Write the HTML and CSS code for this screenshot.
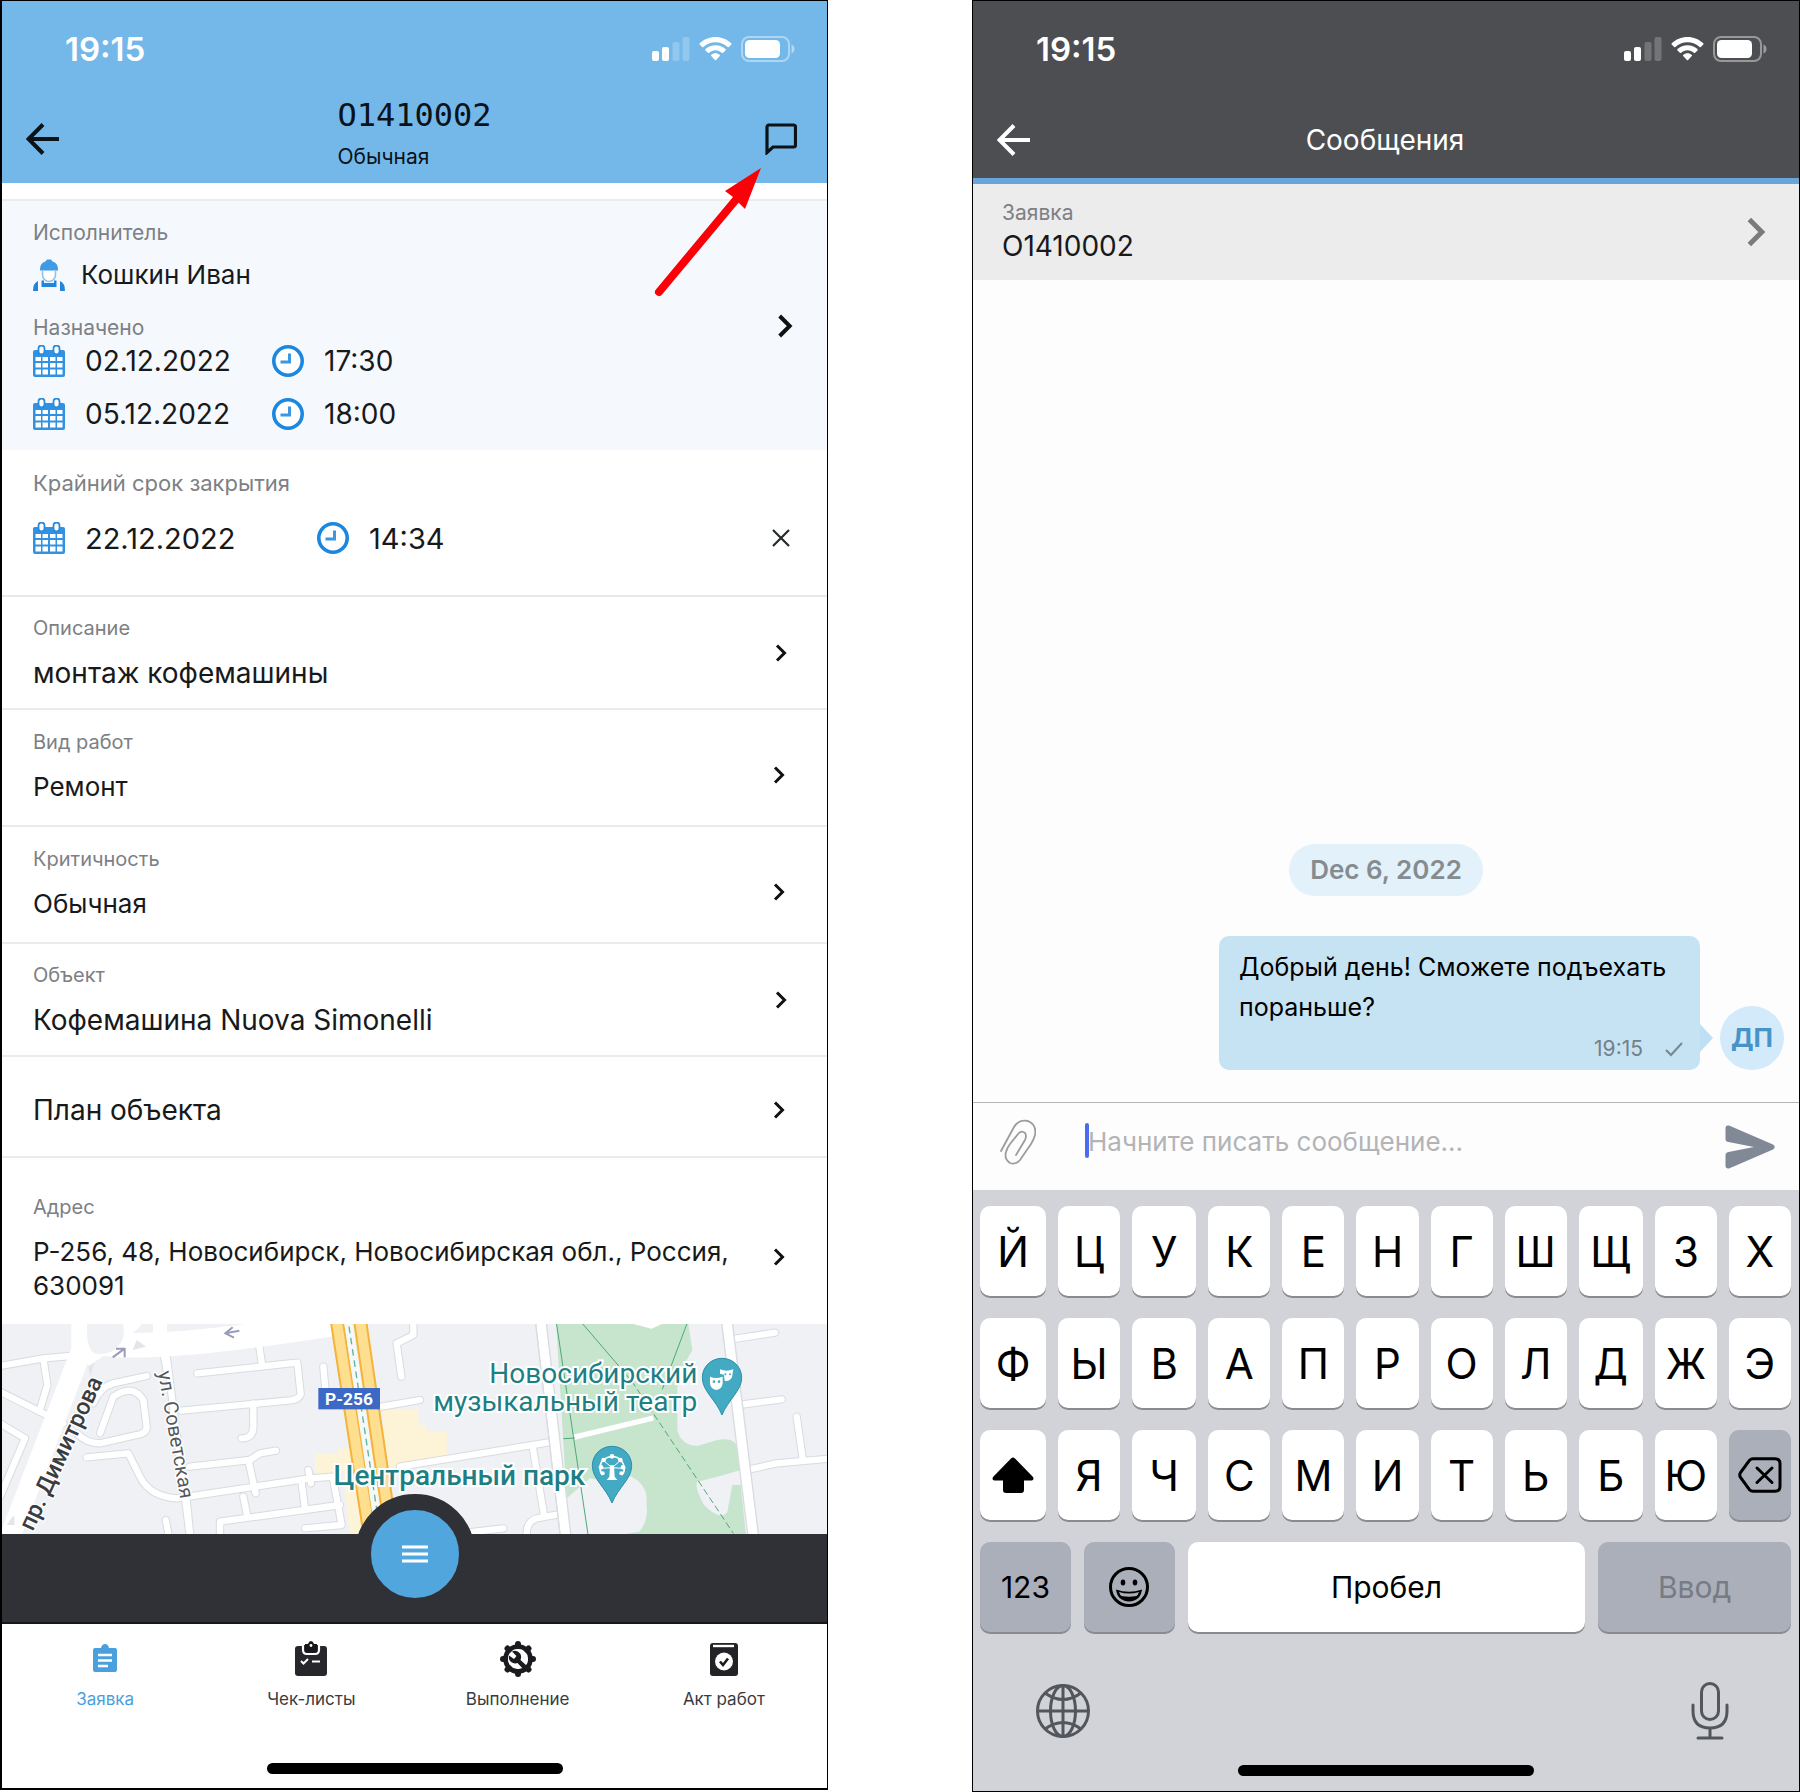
FILE: index.html
```html
<!DOCTYPE html>
<html lang="ru">
<head>
<meta charset="utf-8">
<meta name="viewport" content="width=device-width, initial-scale=1">
<title>Заявка О1410002</title>
<link rel="stylesheet" href="styles.css">
</head>
<body>
<svg class="sprite" aria-hidden="true">
  <symbol id="signal" viewBox="0 0 38 24"><rect x="0" y="14" width="7" height="10" rx="2"/><rect x="10" y="10" width="7" height="14" rx="2"/><rect x="20.500" y="5" width="7" height="19" rx="2" opacity=".22"/><rect x="30.500" y="0" width="7" height="24" rx="2" opacity=".22"/></symbol>
  <symbol id="wifi" viewBox="0 0 33 24"><path d="M16.500 0C22.600 0 28.200 2.400 32.300 6.300c.4.400.4.900 0 1.300l-2.400 2.400c-.4.400-.9.400-1.300 0C25.400 7 21.200 5.200 16.500 5.200S7.600 7 4.400 10c-.4.400-.9.400-1.300 0L.7 7.600c-.4-.4-.4-.9 0-1.300C4.800 2.400 10.400 0 16.500 0z"/><path d="M16.500 8.200c3.900 0 7.400 1.500 10 3.900.4.400.4.900 0 1.300l-2.400 2.400c-.4.400-.9.400-1.300 0-1.700-1.500-3.900-2.500-6.300-2.500s-4.600 1-6.300 2.500c-.4.400-.9.400-1.300 0l-2.400-2.400c-.4-.4-.4-.9 0-1.300 2.600-2.400 6.100-3.900 10-3.900z"/><path d="M16.500 16.200c1.700 0 3.200.6 4.300 1.700.4.400.4.800 0 1.200l-3.700 3.900c-.4.400-.8.400-1.200 0l-3.700-3.900c-.4-.4-.4-.8 0-1.200 1.100-1.100 2.600-1.700 4.300-1.700z"/></symbol>
  <symbol id="battery" viewBox="0 0 54 26"><rect x="1" y="1" width="47" height="24" rx="7" fill="none" stroke="currentColor" stroke-width="2" opacity=".42"/><rect x="4" y="4" width="35" height="18" rx="4.500"/><path d="M50.500 8.500c2 .8 3 2.400 3 4.500s-1 3.700-3 4.500z" opacity=".45"/></symbol>
  <symbol id="back" viewBox="0 0 34 34"><path d="M17 2.500 2.500 17 17 31.500M3 17h30" fill="none" stroke="currentColor" stroke-width="4"/></symbol>
  <symbol id="chevron" viewBox="0 0 12 18"><path d="M2 1.500 9.500 9 2 16.500" fill="none" stroke="currentColor" stroke-width="3"/></symbol>
  <symbol id="calendar" viewBox="0 0 32 32"><path d="M2 5h28a2 2 0 0 1 2 2v23a2 2 0 0 1-2 2H2a2 2 0 0 1-2-2V7a2 2 0 0 1 2-2z" fill="#3092e0"/><rect x="5.500" y=".500" width="6" height="9" rx="3" fill="#fff" stroke="#2a8cdc" stroke-width="1.800"/><rect x="20.500" y=".500" width="6" height="9" rx="3" fill="#fff" stroke="#2a8cdc" stroke-width="1.800"/><g fill="#fff"><path d="M2.500 12h5.500v4H2.500zM9.500 12H15v4H9.500zM17 12h5.500v4H17zM24 12h5.500v4H24zM2.500 18H8v4.500H2.500zM9.500 18H15v4.500H9.500zM17 18h5.500v4.500H17zM24 18h5.500v4.500H24zM2.500 24.500H8v5H2.500zM9.500 24.500H15v5H9.500zM17 24.500h5.500v5H17zM24 24.500h5.500v5H24z"/></g></symbol>
  <symbol id="clock" viewBox="0 0 32 32"><circle cx="16" cy="16" r="14.200" fill="#fff" stroke="#1b87de" stroke-width="3.600"/><path d="M17.500 8.500V17H8.500" fill="none" stroke="#3a97e2" stroke-width="3"/></symbol>
</svg>

<main class="screens">
  <section class="phone phone--request" aria-label="Заявка">
    <header class="top top--blue">
      <div class="status">
        <span class="status__time">19:15</span>
        <span class="status__icons">
          <svg class="i-signal"><use href="#signal"/></svg><svg class="i-wifi"><use href="#wifi"/></svg><svg class="i-battery"><use href="#battery"/></svg>
        </span>
      </div>
      <div class="nav">
        <button class="nav__button" type="button" aria-label="Назад"><svg class="i-back"><use href="#back"/></svg></button>
        <div class="nav__heading">
          <h1 class="nav__number">О1410002</h1>
          <p class="nav__kind">Обычная</p>
        </div>
        <button class="nav__button nav__button--end" type="button" aria-label="Сообщения"><svg class="i-chat" viewBox="0 0 32 32"><path d="M3.500 2h25a2 2 0 0 1 2 2v18a2 2 0 0 1-2 2H8l-6 5.500V4a2 2 0 0 1 1.500-2z" fill="none" stroke="#0b1218" stroke-width="3.200"/></svg></button>
      </div>
      <svg class="pointer" viewBox="0 0 112 132" aria-hidden="true"><path d="M6 126 86 30" stroke="#fb0007" stroke-width="8" stroke-linecap="round"/><path d="M108 2 92 43 84 35 80 31 72 25z" fill="#fb0007"/></svg>
    </header>

    <section class="assignee">
      <div class="assignee__body">
        <p class="label">Исполнитель</p>
        <p class="person">
          <svg class="i-worker" viewBox="0 0 32 32"><path d="M7 10Q7 4 12.500 2.500L14 .5h4l1.500 2Q25 4 25 10v1.500H7z" fill="#3f9be3"/><path d="M9.500 12v3.500c0 4 3 7 6.500 7s6.500-3 6.500-7V12" fill="#fff" stroke="#8fc3ee" stroke-width="1.600"/><path d="M0 32q0-8 5-10v10zM32 32q0-8-5-10v10z" fill="#1f86dc"/><path d="M8.500 21.500h2.500V24h10v-2.500h2.500V28h-15z" fill="#1f86dc"/></svg>
          <span class="value">Кошкин Иван</span>
        </p>
        <p class="label">Назначено</p>
        <div class="dates">
          <div class="when"><svg class="i-32"><use href="#calendar"/></svg><span class="when__date">02.12.2022</span><svg class="i-32"><use href="#clock"/></svg><span>17:30</span></div>
          <div class="when"><svg class="i-32"><use href="#calendar"/></svg><span class="when__date">05.12.2022</span><svg class="i-32"><use href="#clock"/></svg><span>18:00</span></div>
        </div>
      </div>
      <svg class="i-chevron i-chevron--big"><use href="#chevron"/></svg>
    </section>

    <section class="deadline">
      <p class="label">Крайний срок закрытия</p>
      <div class="when when--wide"><svg class="i-32"><use href="#calendar"/></svg><span class="when__date">22.12.2022</span><svg class="i-32"><use href="#clock"/></svg><span>14:34</span>
        <button class="clear" type="button" aria-label="Очистить"><svg class="i-cross" viewBox="0 0 20 20"><path d="m2 2 16 16M18 2 2 18" stroke="#26292b" stroke-width="2.200"/></svg></button>
      </div>
    </section>

    <a class="row" href="#description"><span class="row__text"><span class="label">Описание</span><span class="value value--large">монтаж кофемашины</span></span><svg class="i-chevron"><use href="#chevron"/></svg></a>
    <a class="row row--tall" href="#work"><span class="row__text"><span class="label">Вид работ</span><span class="value">Ремонт</span></span><svg class="i-chevron"><use href="#chevron"/></svg></a>
    <a class="row row--tall" href="#priority"><span class="row__text"><span class="label">Критичность</span><span class="value">Обычная</span></span><svg class="i-chevron"><use href="#chevron"/></svg></a>
    <a class="row" href="#object"><span class="row__text"><span class="label">Объект</span><span class="value value--large">Кофемашина Nuova Simonelli</span></span><svg class="i-chevron"><use href="#chevron"/></svg></a>
    <a class="row row--single" href="#plan"><span class="value value--large">План объекта</span><svg class="i-chevron"><use href="#chevron"/></svg></a>
    <a class="row row--address" href="#address"><span class="row__text"><span class="label">Адрес</span><span class="value">Р-256, 48, Новосибирск, Новосибирская обл., Россия, 630091</span></span><svg class="i-chevron"><use href="#chevron"/></svg></a>

    <svg class="map" viewBox="6 12 2475 630" preserveAspectRatio="xMidYMid slice" role="img" aria-label="Карта">
      <defs>
        <g id="streets" fill="none" stroke-linejoin="round" stroke-linecap="round">
          <path d="M0 138 130 115 245 105M130 115l12 80-24 80M0 215l190 95M0 310l75 45L0 530M490 100l12 60M500 110l70 540"/>
          <path d="M440 168 340 190q-40 10-60 60M300 340l40-110q60-40 90 10l10 80q0 20-30 25l-110 25q-40 0-70-30M260 412l125-12 35 70q30 60 110 65l400-60 70-5"/>
          <path d="M592 160l300-32 10 95q-5 15-30 18L545 272M775 60l12 80M760 250v70q0 35-35 35M570 440l180-20 30-20 48-8M745 420l22 100M730 530l12 60M905 490l10 75M660 645v-40l360-50M925 450l8 40M1000 480l25 135-110 10"/>
          <path d="M970 140l6 65M560 540l10 100M497 600l8 40M1204 170l-14-100 50-25 0-60M1145 260l115-20"/>
          <path d="M1200 440 1660 365M1598 380l35 210M1580 640q0-35 30-45l80-15M1380 640l130-15M2180 60l145-22M2215 255l130-17M2390 290l18 125M2240 450l90-20 170-15"/>
        </g>
      </defs>
      <rect x="0" y="0" width="2490" height="650" fill="#eff1f4"/>
      <path d="M1150 270h105v45h25v20h60v70l-190 40v205h-100l-20-190h-85v-60h70v-15h135z" fill="#fdf3d6"/>
      <path d="M1668 0h395l14 90-45 80v160q10 45 60 48l60-18q50-10 60 20l10 70-70 20q-40 10-60 15-10 15 20 70 50 50 70 20l15-80h25l20 190H1818q-5-40 40-40l60-10q25-30 22-70-10-50-70-70l-100-20-70 60z" fill="#c7e4cd"/>
      <path d="M1790 450l105 20q40 20 45 60v50q-10 25-40 30-60-10-80 30h-50z" fill="#eff1f4"/>
      <path d="M1900 12h85l-30 14z" fill="#fff"/>
      <use href="#streets" stroke="#d9dbe0" stroke-width="25"/>
      <use href="#streets" stroke="#fff" stroke-width="19"/>
      <path d="M1622 0l75 650M2180 0l80 650" stroke="#d9dbe0" stroke-width="36"/>
      <path d="M1622 0l75 650M2180 0l80 650" stroke="#fff" stroke-width="28"/>
      <path d="M1606 0l75 650" stroke="#dadde1" stroke-width="3"/>
      <g stroke="#fff" fill="none"><path d="M1720 352l240-58" stroke-width="16"/><path d="M270 60Q380 110 1010 10" stroke-width="74"/><path d="M245 0v90L30 650" stroke-width="62"/><path d="M255 120 345 60 410 0M480 0v90" stroke-width="42"/></g>
      <path d="M262 10q-6 70 20 90 60 10 85-40 10-30 0-50z" fill="#eff1f4"/>
      <path d="M410 60l28 20-40 10z" fill="#e3e5e9"/>
      <path d="M265 140l18-12-12 40zM20 615l22-30 2 30z" fill="#e3e5e9"/>
      <g fill="none" stroke="#4ea977" stroke-width="3"><path d="M1668 0 1765 650M1745 8l150 175M2062 8l-75 200M1690 356l35-2"/><path d="M1895 183 2200 640" stroke-dasharray="20 10"/></g>
      <path d="M1010 0 1110 650M1080 0 1175 650" stroke="#f5b23c" stroke-width="42"/>
      <path d="M1010 0 1110 650M1080 0 1175 650" stroke="#fddf8f" stroke-width="30"/>
      <path d="M1044 0 1140 650" stroke="#f4f8f7" stroke-width="25"/>
      <path d="M1047 20 1138 620" stroke="#5fb3a0" stroke-width="4" stroke-dasharray="20 14"/>
      <g fill="none" stroke="#9a9bbb" stroke-width="6"><path d="M718 32l-42 8m22-18-22 18 26 13M338 112l36-26m-26 0h26v26"/></g>
      <rect x="955" y="204" width="185" height="64" fill="#3c68c6"/>
      <text x="1047" y="254" text-anchor="middle" class="map__road-sign">Р-256</text>
      <g class="map__street">
        <text transform="translate(98 636) rotate(-65)" class="map__street--main">пр. Димитрова</text>
        <text transform="translate(474 156) rotate(80)">ул. Советская</text>
      </g>
      <g class="map__place">
        <text x="2092" y="188" text-anchor="end">Новосибирский</text>
        <text x="2092" y="272" text-anchor="end">музыкальный театр</text>
        <text x="1756" y="495" text-anchor="end" class="map__place--park">Центральный парк</text>
      </g>
      <g fill="#43aac3" stroke="#2e8fa8" stroke-width="3">
        <path d="M2166 115c33 0 59 26 59 58 0 40-40 65-59 112-19-47-59-72-59-112 0-32 26-58 59-58z"/>
        <path d="M1836 379c33 0 59 26 59 58 0 40-40 65-59 112-19-47-59-72-59-112 0-32 26-58 59-58z"/>
      </g>
      <path d="M2130 170q18 8 38 0v20q-2 18-19 20-17-2-19-20z" fill="#fff"/><path d="M2160 148q20 8 40 0l-4 24q-8 14-22 10l-2-18-12-3z" fill="#fff"/>
      <g fill="#43aac3"><circle cx="2142" cy="185" r="4"/><circle cx="2157" cy="185" r="4"/><circle cx="2176" cy="163" r="3"/><circle cx="2190" cy="163" r="3"/></g>
      <g fill="none" stroke="#fff"><path d="M1806 465q-14-28 4-46 28-20 52 0 20 24 4 46" stroke-width="5"/><path d="M1812 423l24 20 24-20M1804 445l32-2 32 2" stroke-width="3"/></g>
      <g fill="#fff"><path d="M1830 436h12l2 34 8 10h-32l8-10z"/><circle cx="1803" cy="442" r="7"/><circle cx="1811" cy="420" r="7"/><circle cx="1836" cy="409" r="7"/><circle cx="1861" cy="420" r="7"/><circle cx="1869" cy="442" r="7"/><circle cx="1808" cy="460" r="6"/><circle cx="1864" cy="460" r="6"/></g>
    </svg>

    <div class="dock">
      <button class="fab" type="button" aria-label="Меню"><svg class="i-menu" viewBox="0 0 26 18"><path d="M0 2h26M0 9h26M0 16h26" stroke="#fff" stroke-width="3"/></svg></button>
    </div>

    <nav class="tabs">
      <a class="tab tab--active" href="#request">
        <svg class="tab__icon" viewBox="0 0 36 36"><path d="M8 7h6q1-4 4-4t4 4h6q2 0 2 2v20q0 2-2 2H8q-2 0-2-2V9q0-2 2-2z" fill="currentColor"/><path d="M11 14h14M11 19.500h14M11 25h10" stroke="#fff" stroke-width="2.600"/></svg>
        Заявка</a>
      <a class="tab" href="#checklists">
        <svg class="tab__icon" viewBox="0 0 36 36"><rect x="2" y="5" width="32" height="30" rx="3" fill="#26262b"/><path d="M10 4v5q0 4 4 4h8q4 0 4-4V4" fill="#1a1a1e" stroke="#fff" stroke-width="2.200"/><path d="M12 3h3q1-3 3-3t3 3h3v5q0 2-2 2h-8q-2 0-2-2z" fill="#17171a"/><circle cx="18" cy="4.500" r="1.400" fill="#fff"/><path d="m8 20 2.500 2.500L15 18M19 20.500h8" fill="none" stroke="#fff" stroke-width="2"/></svg>
        Чек-листы</a>
      <a class="tab" href="#work-progress">
        <svg class="tab__icon" viewBox="0 0 36 36"><circle cx="18" cy="18" r="12.500" fill="none" stroke="#1b1b1f" stroke-width="4.600"/><g stroke="#1b1b1f" stroke-width="6" stroke-linecap="round"><path d="M18 3v2M18 31v2M3 18h2M31 18h2M7.500 7.500l1.400 1.400M27.100 27.100l1.400 1.400M28.500 7.500l-1.400 1.400M8.900 27.100l-1.400 1.400"/></g><path d="M12 10.500l4.500 4.500-2.500 3-5-3.500q-1 5 3 7 3 1.500 5.500.5l6 6.500 3.500-3.500-6.500-6q1.500-4-.500-6.500-3-4-8-2z" fill="#1b1b1f"/></svg>
        Выполнение</a>
      <a class="tab" href="#act">
        <svg class="tab__icon" viewBox="0 0 36 36"><path d="M7 2h22q3 0 3 3v27q0 3-3 3H7q-3 0-3-3V5q0-3 3-3z" fill="#222227"/><path d="M7 5h21" stroke="#fff" stroke-width="2.400"/><circle cx="18" cy="20.500" r="9" fill="#fff"/><path d="m14 20.500 3 3.500 5-6.500" fill="none" stroke="#1b1b1f" stroke-width="2.600"/></svg>
        Акт работ</a>
    </nav>
    <div class="home-bar"></div>
  </section>

  <section class="phone phone--chat" aria-label="Сообщения">
    <header class="top top--dark">
      <div class="status">
        <span class="status__time">19:15</span>
        <span class="status__icons">
          <svg class="i-signal"><use href="#signal"/></svg><svg class="i-wifi"><use href="#wifi"/></svg><svg class="i-battery"><use href="#battery"/></svg>
        </span>
      </div>
      <div class="nav">
        <button class="nav__button" type="button" aria-label="Назад"><svg class="i-back"><use href="#back"/></svg></button>
        <h2 class="nav__title">Сообщения</h2>
      </div>
    </header>

    <a class="request-link" href="#request"><span class="row__text row__text--close"><span class="label">Заявка</span><span class="value value--large">О1410002</span></span><svg class="i-chevron i-chevron--grey"><use href="#chevron"/></svg></a>

    <div class="chat">
      <time class="chat__date" datetime="2022-12-06">Dec 6, 2022</time>
      <div class="message">
        <div class="bubble">
          <p class="bubble__text">Добрый день! Сможете подъехать пораньше?</p>
          <p class="bubble__meta"><time>19:15</time><svg class="i-check" viewBox="0 0 18 16"><path d="m1 9 5 5L17 2" fill="none" stroke="#748891" stroke-width="2"/></svg></p>
        </div>
        <span class="avatar">ДП</span>
      </div>
    </div>

    <form class="composer">
      <button class="icon-button" type="button" aria-label="Прикрепить файл"><svg class="i-clip" viewBox="0 0 36 46"><path d="M1 32 14 8Q19 0 28 2q9 4 7 14-1 4-4 9L20 41q-4 5-10 3-6-4-4-11 1-4 4-8l8-10q3-4 7-1 2 3 0 7l-9 15" fill="none" stroke="#9b9c9e" stroke-width="1.800" stroke-linecap="round"/></svg></button>
      <label class="composer__field"><span class="composer__caret"></span><input class="composer__input" type="text" placeholder="Начните писать сообщение..." aria-label="Сообщение"></label>
      <button class="icon-button icon-button--send" type="button" aria-label="Отправить"><svg class="i-send" viewBox="0 0 50 44"><path d="M4 .600 48 19.500q3.500 2.500 0 5L4 43.500q-3.500.5-3.500-3V30q0-2.500 3-3L29 22 3.500 17q-3-.5-3-3V3.500Q.5-.2 4 .600z" fill="#818896"/></svg></button>
    </form>

    <div class="keyboard">
      <div class="keys"><button class="key" type="button">Й</button><button class="key" type="button">Ц</button><button class="key" type="button">У</button><button class="key" type="button">К</button><button class="key" type="button">Е</button><button class="key" type="button">Н</button><button class="key" type="button">Г</button><button class="key" type="button">Ш</button><button class="key" type="button">Щ</button><button class="key" type="button">З</button><button class="key" type="button">Х</button></div>
      <div class="keys"><button class="key" type="button">Ф</button><button class="key" type="button">Ы</button><button class="key" type="button">В</button><button class="key" type="button">А</button><button class="key" type="button">П</button><button class="key" type="button">Р</button><button class="key" type="button">О</button><button class="key" type="button">Л</button><button class="key" type="button">Д</button><button class="key" type="button">Ж</button><button class="key" type="button">Э</button></div>
      <div class="keys"><button class="key" type="button" aria-label="Регистр"><svg class="i-shift" viewBox="0 0 42 36"><path d="M19 1.500q2-2 4 0L41 20q1.500 3-1.500 3.500H32V33q0 3-3 3H14q-3 0-3-3v-9.500H2.500Q-.5 23 1 20z" fill="#000"/></svg></button><button class="key" type="button">Я</button><button class="key" type="button">Ч</button><button class="key" type="button">С</button><button class="key" type="button">М</button><button class="key" type="button">И</button><button class="key" type="button">Т</button><button class="key" type="button">Ь</button><button class="key" type="button">Б</button><button class="key" type="button">Ю</button><button class="key key--grey" type="button" aria-label="Удалить"><svg class="i-delete" viewBox="0 0 44 36"><path d="M15 1.800h22q5 0 5 5v22.400q0 5-5 5H15q-2 0-3.500-1.500L2.500 20.500q-1.500-2.500 0-5l9-12.200Q13 1.800 15 1.800z" fill="none" stroke="#000" stroke-width="3"/><path d="m19 11 15 14.500M34 11 19 25.500" stroke="#000" stroke-width="3" stroke-linecap="round"/></svg></button></div>
      <div class="keys keys--bottom"><button class="key key--grey key--word" type="button">123</button><button class="key key--grey" type="button" aria-label="Эмодзи"><svg class="i-smile" viewBox="0 0 42 42"><circle cx="21" cy="21" r="18.500" fill="none" stroke="#000" stroke-width="3"/><ellipse cx="15" cy="16.500" rx="2.300" ry="3"/><ellipse cx="27" cy="16.500" rx="2.300" ry="3"/><path d="M8 23.500q13 4.500 26 0-1.500 11.500-13 12-11.500-.5-13-12z"/><path d="M11 26q10 3 20 0-1 3-2.500 4-7.500 1.500-15 0Q12 29 11 26z" fill="#abafba"/></svg></button><button class="key key--word" type="button">Пробел</button><button class="key key--grey key--word key--muted" type="button">Ввод</button></div>
      <div class="keyboard__extras">
        <button class="icon-button" type="button" aria-label="Сменить язык"><svg class="i-globe" viewBox="0 0 54 54"><g fill="none" stroke="#53565b" stroke-width="3"><circle cx="27" cy="27" r="25.500"/><ellipse cx="27" cy="27" rx="12.500" ry="25.500"/><path d="M27 1.500v51M1.500 27h51M9 9q18 13 36 0M9 45q18-13 36 0"/></g></svg></button>
        <button class="icon-button" type="button" aria-label="Диктовка"><svg class="i-mic" viewBox="0 0 38 58"><g fill="none" stroke="#53565b" stroke-width="3" stroke-linecap="round"><rect x="10.500" y="1.500" width="17" height="36" rx="8.500"/><path d="M2 23v6q0 17 17 17t17-17v-6M19 46v10M7 56h24"/></g></svg></button>
      </div>
      <div class="home-bar"></div>
    </div>
  </section>
</main>
</body>
</html>
```
FILE: styles.css
```css
* { box-sizing: border-box; }

body {
  margin: 0;
  background: #fff;
  color: #17191b;
  font-family: Inter, "Liberation Sans", sans-serif;
}

h1, h2, p { margin: 0; font-weight: 400; }
svg { display: block; flex: none; fill: currentColor; }
a { color: inherit; text-decoration: none; }
button {
  margin: 0;
  padding: 0;
  border: 0;
  background: none;
  color: inherit;
  font: inherit;
}

.sprite { position: absolute; width: 0; height: 0; }

.screens {
  display: flex;
  justify-content: space-between;
  align-items: flex-start;
}

.phone {
  width: 46%;
  display: flex;
  flex-direction: column;
  border: 1px solid #000;
}
.phone--request { border-left-width: 2px; border-bottom-width: 2px; }
.phone--chat { min-height: 100vh; background: #fdfdfe; }

/* header */
.top { position: relative; }
.top--blue { background: #74b8ea; color: #0b1218; }
.top--dark { background: #4d4e52; color: #fff; border-bottom: 6px solid #69a5da; }

.status {
  display: flex;
  align-items: center;
  justify-content: space-between;
  height: 96px;
  padding: 0 32px 0 63px;
  color: #fff;
}
.status__time { font-size: 33px; font-weight: 600; }
.status__icons { display: flex; align-items: center; gap: 9px; }
.i-signal { width: 38px; height: 24px; }
.i-wifi { width: 33px; height: 24px; }
.i-battery { width: 54px; height: 26px; }

.nav {
  display: grid;
  grid-template-columns: 1fr auto 1fr;
  align-items: center;
  height: 86px;
  padding: 0 30px 2px 24px;
}
.top--dark .nav { height: 81px; padding: 4px 26px 0 24px; }
.nav__button { justify-self: start; }
.nav__button--end { justify-self: end; }
.nav__heading { padding: 0 0 6px 6px; }
.nav__number { font: 32px/36px "DejaVu Sans Mono", monospace; }
.nav__kind { margin-top: 6px; font-size: 21px; line-height: 36px; }
.nav__title { font-size: 28px; line-height: 36px; }
.i-back { width: 34px; height: 34px; }
.i-chat { width: 32px; height: 32px; }

.pointer {
  position: absolute;
  top: 165px;
  right: 62px;
  width: 112px;
  height: 132px;
}

/* request details */
.label { display: block; color: #7d8084; font-size: 20px; line-height: 24px; }
.value { display: block; font-size: 26px; line-height: 34px; }
.value--large { font-size: 28px; }

.i-chevron { width: 12px; height: 18px; color: #111; }
.i-chevron--big { width: 16px; height: 24px; }
.i-chevron--grey { width: 20px; height: 30px; color: #7b7b7b; }
.i-32, .i-worker { width: 32px; height: 32px; }

.assignee {
  display: flex;
  align-items: center;
  justify-content: space-between;
  margin-top: 16px;
  padding: 20px 34px 20px 31px;
  border-top: 2px solid #ebecec;
  background: #f5f9fe;
}
.assignee .label { font-size: 21px; }
.person { display: flex; align-items: center; gap: 16px; margin: 13px 0 24px; }
.dates { display: grid; gap: 21px; margin-top: 5px; }
.when { display: flex; align-items: center; gap: 20px; height: 32px; font-size: 28px; }
.when__date { width: 167px; }
.when--wide { font-size: 29px; }
.when--wide .when__date { width: 212px; }
.clear { margin-left: auto; }
.i-cross { width: 20px; height: 20px; }

.deadline { padding: 21px 36px 41px 31px; border-bottom: 2px solid #e9e9e9; }
.deadline .label { font-size: 22px; }
.deadline .when { margin-top: 27px; }

.row {
  display: flex;
  align-items: center;
  justify-content: space-between;
  gap: 16px;
  padding: 19px 40px 18px 31px;
  border-bottom: 2px solid #ebebeb;
}
.row__text { display: grid; gap: 16px; }
.row__text--close { gap: 4px; }
.row--tall { padding: 20px 42px 21px 31px; }
.row--tall .i-chevron { margin-top: 16px; }
.row--single { padding: 36px 42px 29px 31px; }
.row--address { padding: 37px 42px 21px 31px; border-bottom: 0; }
.row--address .i-chevron { margin-top: 16px; }

.map { width: 100%; height: 210px; }
.map text { font-family: Roboto, sans-serif; }
.map__road-sign { fill: #fff; font-size: 52px; font-weight: 700; }
.map__street { fill: #55585c; font-size: 60px; stroke: #fff; stroke-width: 8px; paint-order: stroke; }
.map__street--main { fill: #3a3d40; font-size: 71px; font-weight: 500; }
.map__place { fill: #1d7f83; font-size: 84px; stroke: #fff; stroke-width: 12px; paint-order: stroke; }
.map__place--park { font-weight: 500; }

.dock {
  position: relative;
  height: 90px;
  background: #303136;
  border-bottom: 2px solid #16171c;
}
.fab {
  position: absolute;
  top: -40px;
  left: 50%;
  display: grid;
  place-items: center;
  width: 120px;
  height: 120px;
  margin-left: -60px;
  border: 16px solid #303136;
  border-radius: 50%;
  background: #52a6de;
}
.i-menu { width: 26px; height: 18px; }

.tabs {
  display: grid;
  grid-template-columns: repeat(4, 1fr);
  padding-top: 17px;
}
.tab {
  display: grid;
  justify-items: center;
  gap: 10px;
  color: #3a3b40;
  font-size: 17px;
  line-height: 24px;
}
.tab--active { color: #4aa0dd; }
.tab__icon { width: 36px; height: 36px; }

.home-bar {
  width: 296px;
  height: 11px;
  margin: 52px auto 14px;
  border-radius: 6px;
  background: #000;
}

/* messages */
.request-link {
  display: flex;
  align-items: center;
  justify-content: space-between;
  padding: 17px 33px 17px 29px;
  background: #ececec;
}
.request-link .label { font-size: 21px; }

.chat {
  flex: 1;
  display: flex;
  flex-direction: column;
  justify-content: flex-end;
  gap: 40px;
  padding: 32px 15px;
}
.chat__date {
  align-self: center;
  padding: 0 21px;
  border-radius: 26px;
  background: #e2f1fa;
  color: #858c90;
  font-size: 26px;
  font-weight: 600;
  line-height: 52px;
}
.message { display: flex; justify-content: flex-end; align-items: flex-end; gap: 20px; }
.bubble {
  position: relative;
  max-width: 481px;
  padding: 11px 17px 9px 20px;
  border-radius: 10px;
  background: #c6e3f4;
  color: #000;
}
.bubble::after {
  content: "";
  position: absolute;
  right: -13px;
  bottom: 18px;
  border: 14px solid transparent;
  border-left: 13px solid #bfe0f4;
  border-right: 0;
}
.bubble__text { font-size: 25px; line-height: 40px; }
.bubble__meta {
  display: flex;
  justify-content: flex-end;
  align-items: center;
  gap: 22px;
  margin-top: 10px;
  color: #748088;
  font-size: 21px;
  line-height: 24px;
}
.i-check { width: 18px; height: 16px; }
.avatar {
  flex: none;
  width: 64px;
  border-radius: 50%;
  background: #d3eafb;
  color: #4793c8;
  font-size: 26px;
  font-weight: 700;
  line-height: 64px;
  text-align: center;
}

.composer {
  display: flex;
  align-items: center;
  padding: 11px 24px 21px 27px;
  border-top: 1px solid #b4b5b7;
}
.icon-button--send { padding-top: 11px; }
.i-clip { width: 36px; height: 46px; }
.i-send { width: 50px; height: 44px; }
.composer__field { position: relative; flex: 1; margin: 0 24px 0 52px; }
.composer__caret {
  position: absolute;
  top: 0;
  left: -3px;
  width: 4px;
  height: 35px;
  border-radius: 2px;
  background: #4a6cf0;
}
.composer__input {
  width: 100%;
  height: 38px;
  padding: 0;
  border: 0;
  outline: 0;
  background: none;
  color: #000;
  font: 26px/38px Inter, "Liberation Sans", sans-serif;
}
.composer__input::placeholder { color: #b3b4b6; opacity: 1; }

.keyboard {
  display: grid;
  gap: 22px;
  padding: 16px 8px 0 7px;
  background: #d1d3d8;
  color: #000;
}
.keys {
  display: grid;
  grid-template-columns: 66fr 62fr 64fr repeat(5, 62fr) 64fr 62fr 62fr;
  gap: 12px;
}
.keys--bottom { grid-template-columns: 91fr 91fr 398fr 193fr; gap: 13px; }
.key {
  display: grid;
  place-items: center;
  height: 90px;
  border-radius: 10px;
  background: #fff;
  box-shadow: 0 2px 0 #898b90;
  font-size: 42px;
}
.key--grey { background: #abafba; }
.key--word { font-size: 30px; }
.key--muted { color: #777b84; }
.i-shift { width: 42px; height: 36px; }
.i-delete { width: 44px; height: 36px; }
.i-smile { width: 42px; height: 42px; }

.keyboard__extras {
  display: flex;
  justify-content: space-between;
  align-items: center;
  margin-top: 28px;
  padding: 0 62px 0 56px;
}
.i-globe { width: 54px; height: 54px; }
.i-mic { width: 38px; height: 58px; }
.keyboard .home-bar { margin: 3px auto 15px; }
```
